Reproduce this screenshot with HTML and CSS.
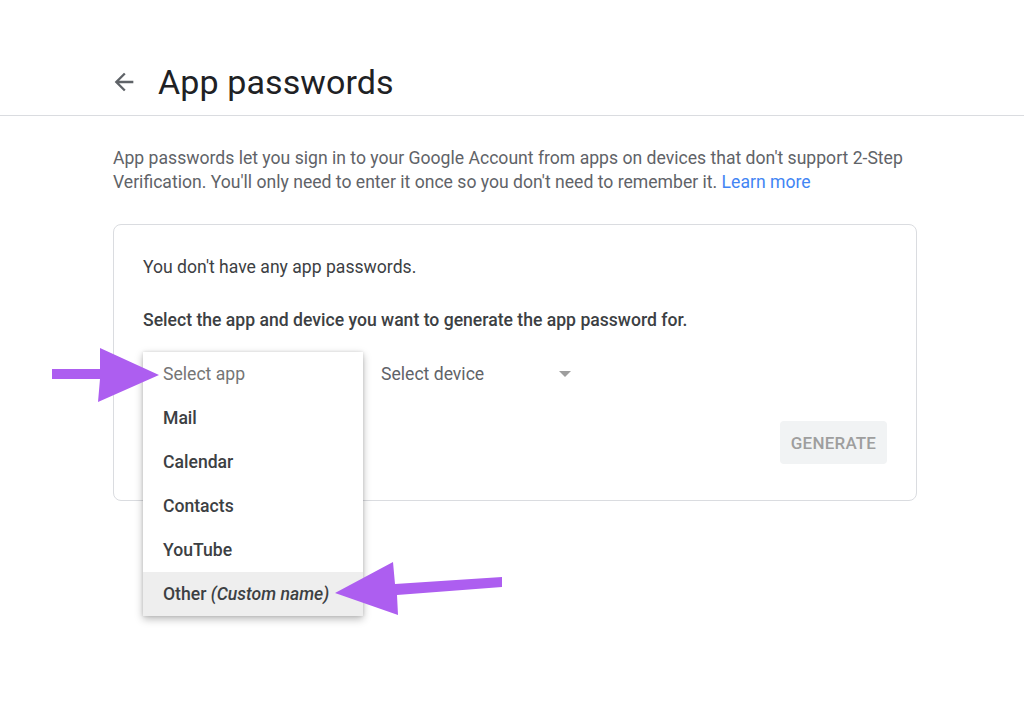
FILE: index.html
```html
<!DOCTYPE html>
<html lang="en">
<head>
<meta charset="utf-8">
<title>App passwords</title>
<link rel="stylesheet" href="styles.css">
</head>
<body>
<header class="topbar">
  <svg class="back" width="28" height="28" viewBox="0 0 24 24" aria-hidden="true"><path d="M20 11H7.83l5.59-5.59L12 4l-8 8 8 8 1.41-1.41L7.83 13H20v-2z" fill="#5f6368"/></svg>
  <h1 class="title">App passwords</h1>
</header>
<main class="content">
  <p class="intro">App passwords let you sign in to your Google Account from apps on devices that don't support 2-Step Verification. You'll only need to enter it once so you don't need to remember it. <a class="link" href="#">Learn more</a></p>
  <section class="card">
    <p class="empty">You don't have any app passwords.</p>
    <p class="instr">Select the app and device you want to generate the app password for.</p>
    <div class="selects">
      <div class="field app-field">
        <ul class="menu">
          <li class="opt placeholder">Select app</li>
          <li class="opt">Mail</li>
          <li class="opt">Calendar</li>
          <li class="opt">Contacts</li>
          <li class="opt">YouTube</li>
          <li class="opt hover">Other <em>(Custom name)</em></li>
        </ul>
      </div>
      <div class="field device-field">
        <span class="field-label">Select device</span>
        <span class="caret"></span>
      </div>
    </div>
    <div class="actions">
      <button class="gen" type="button">Generate</button>
    </div>
  </section>
</main>
<svg class="arrows" width="1024" height="707" viewBox="0 0 1024 707" aria-hidden="true">
  <path d="M52 369 L100 369 L100 348 L159 375 L98 402 L100 379 L52 379 Z" fill="#ad5ef0"/>
  <path d="M502 577 L502 587 L397 595 L398 615 L335 593 L393 562 L395 584 Z" fill="#ad5ef0"/>
</svg>
</body>
</html>
```

FILE: styles.css
```css
* { box-sizing: border-box; }
html, body { margin: 0; padding: 0; background: #fff; }
body {
  font-family: Roboto, "Liberation Sans", Arial, sans-serif;
  color: #202124;
  position: relative;
  width: 1024px;
  height: 707px;
  overflow: hidden;
}
.topbar {
  display: flex;
  align-items: center;
  gap: 20px;
  padding: 58px 0 9px 110px;
  height: 116px;
  border-bottom: 1px solid #dadce0;
}
.back { display: block; flex: none; }
.title {
  margin: 0;
  font-size: 34px;
  line-height: 48px;
  font-weight: 400;
  color: #202124;
  letter-spacing: 0.1px;
}
.content {
  margin-left: 113px;
  width: 804px;
}
.intro {
  margin: 30px 0 0;
  font-size: 17.6px;
  line-height: 24px;
  color: #5f6368;
}
.link { color: #4285f4; text-decoration: none; }
.card {
  margin-top: 30px;
  border: 1px solid #dadce0;
  border-radius: 8px;
  padding: 30px 29px 36px;
  height: 277px;
}
.empty, .instr {
  margin: 0;
  font-size: 17.6px;
  line-height: 24px;
}
.empty { color: #3c4043; }
.instr { margin-top: 29px; color: #3c4043; font-weight: 500; }
.selects {
  display: flex;
  margin-top: 20px;
  height: 44px;
}
.field {
  position: relative;
  display: flex;
  align-items: center;
  height: 44px;
}
.app-field { width: 220px; }
.device-field {
  width: 210px;
  padding-left: 18px;
  justify-content: space-between;
  font-size: 17.6px;
  color: #5f6368;
}
.caret {
  width: 0; height: 0;
  border-left: 6px solid transparent;
  border-right: 6px solid transparent;
  border-top: 6px solid #9e9e9e;
  margin-right: 2px;
}
.menu {
  position: absolute;
  left: 0;
  top: 0;
  width: 220px;
  margin: 0;
  padding: 0;
  list-style: none;
  background: #fff;
  box-shadow: 0 3px 8px rgba(0,0,0,0.28), 0 0 3px rgba(0,0,0,0.12);
  z-index: 2;
}
.opt {
  height: 44px;
  line-height: 44px;
  padding-left: 20px;
  font-size: 17.6px;
  font-weight: 500;
  color: #3c4043;
}
.opt.placeholder { color: #757575; font-weight: 400; }
.opt.hover { background: #eeeeee; }
.opt em { font-weight: 500; font-style: italic; }
.actions {
  display: flex;
  justify-content: flex-end;
  margin-top: 25px;
}
.gen {
  width: 107px;
  height: 43px;
  border: none;
  border-radius: 4px;
  background: #f1f3f4;
  color: #9e9e9e;
  font-family: inherit;
  font-size: 17px;
  font-weight: 500;
  text-transform: uppercase;
  letter-spacing: 0.2px;
  padding: 0;
}
.arrows {
  position: absolute;
  left: 0;
  top: 0;
  z-index: 5;
  pointer-events: none;
}
```
